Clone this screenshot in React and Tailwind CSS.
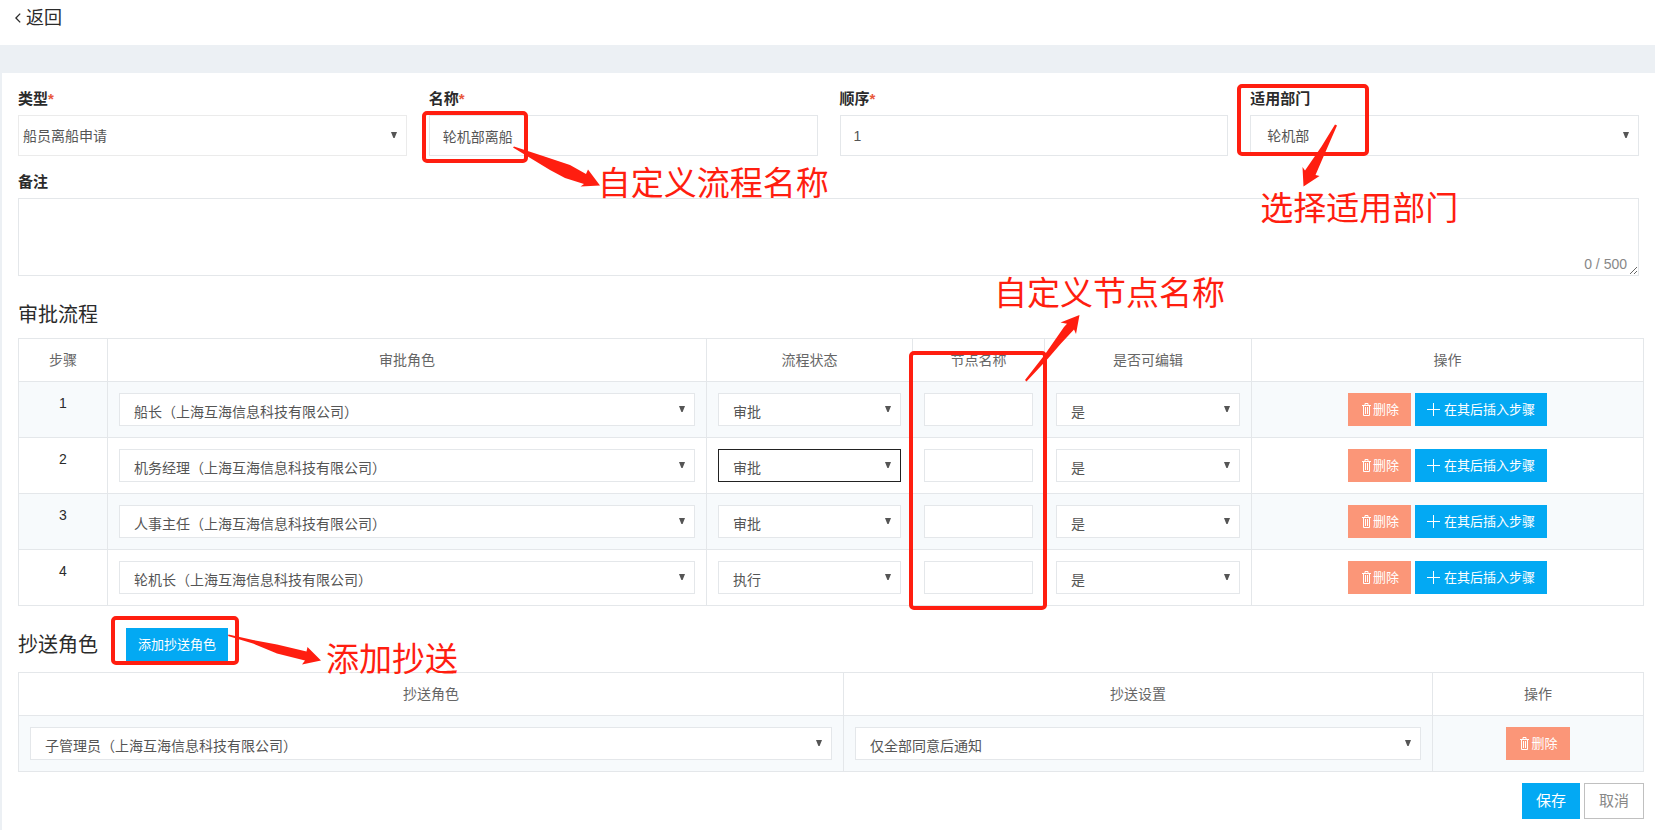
import { useState } from 'react';
import clsx from 'clsx';

const COMPANY = '（上海互海信息科技有限公司）';

const initialSteps = [
  { id: 1, role: '船长', status: '审批', nodeName: '', editable: '是' },
  { id: 2, role: '机务经理', status: '审批', nodeName: '', editable: '是', active: true },
  { id: 3, role: '人事主任', status: '审批', nodeName: '', editable: '是' },
  { id: 4, role: '轮机长', status: '执行', nodeName: '', editable: '是' },
];

const roleOptions = ['船长', '机务经理', '人事主任', '轮机长', '子管理员'].map((r) => r + COMPANY);

function TrashIcon() {
  return (
    <svg width="13" height="13" viewBox="0 0 13 13" fill="none" stroke="currentColor" aria-hidden="true">
      <path d="M2 2.5h9M5 2V.5h3V2M3.5 2.5v10h6v-10M5.500 4v7M7.500 4v7" />
    </svg>
  );
}

function PlusIcon() {
  return (
    <svg width="13" height="13" viewBox="0 0 13 13" fill="none" stroke="currentColor" aria-hidden="true">
      <path d="M6.5 0v13M0 6.5h13" />
    </svg>
  );
}

function Select({ id, label, options, defaultValue, className }) {
  return (
    <div className="relative">
      <select
        id={id}
        aria-label={label}
        defaultValue={defaultValue}
        className={clsx('block w-full appearance-none border bg-white pr-7 text-sm text-[#555] outline-none', className)}
      >
        {options.map((option) => (
          <option key={option}>{option}</option>
        ))}
      </select>
      <svg
        className="pointer-events-none absolute top-0 bottom-px right-[10px] my-auto fill-[#555]"
        width="6"
        height="6"
        viewBox="0 0 6 6"
        aria-hidden="true"
      >
        <path d="M0 0h6L3.6 6H2.4z" />
      </svg>
    </div>
  );
}

function TableSelect({ active, ...props }) {
  return (
    <Select {...props} className={clsx('h-[33px] pt-1 pl-[14px]', active ? 'border-[#222]' : 'border-[#e4e7ea]')} />
  );
}

function FieldLabel({ htmlFor, required, children }) {
  return (
    <label htmlFor={htmlFor} className="mb-1.5 block text-[15px] leading-5 font-bold text-[#2b2b2b]">
      {children}
      {required ? <span className="text-[#e8583c]">*</span> : null}
    </label>
  );
}

function DeleteButton({ onClick }) {
  return (
    <button
      type="button"
      onClick={onClick}
      className="inline-flex h-[33px] items-center bg-[#fb9678] px-3 text-[13px] text-white"
    >
      <TrashIcon />
      删除
    </button>
  );
}

// Red frame drawn over the part of the form being explained
function Frame({ className }) {
  return (
    <span
      className={clsx('pointer-events-none absolute z-10 rounded-[5px] border-4 border-[#ff1e10]', className)}
    />
  );
}

function Note({ className, children }) {
  return (
    <span
      className={clsx(
        'pointer-events-none absolute z-10 text-[33px] leading-10 font-normal whitespace-nowrap text-[#ff1e10]',
        className,
      )}
    >
      {children}
    </span>
  );
}

function Arrow({ className, width, height, d }) {
  return (
    <svg
      className={clsx('pointer-events-none absolute z-20 fill-[#ff1e10]', className)}
      width={width}
      height={height}
      viewBox={`0 0 ${width} ${height}`}
      aria-hidden="true"
    >
      <path d={d} />
    </svg>
  );
}

export default function App() {
  const [steps, setSteps] = useState(initialSteps);
  const [copyRoles, setCopyRoles] = useState([{ id: 1, role: '子管理员', rule: '仅全部同意后通知' }]);
  const [remark, setRemark] = useState('');

  const insertAfter = (index) => {
    const next = [...steps];
    next.splice(index + 1, 0, { id: Date.now(), role: '船长', status: '审批', nodeName: '', editable: '是' });
    setSteps(next);
  };

  const cell = 'border border-[#e4e7ea] p-[11px]';
  const headCell = 'border border-[#e4e7ea] py-[11px] font-normal text-[#666]';

  return (
    <div className="min-h-screen bg-[#ecf0f4] font-['Liberation_Sans','Noto_Sans_CJK_SC',sans-serif] text-sm leading-5 text-[#2b2b2b]">
      <header className="flex h-[45px] items-start bg-white px-[15px] pt-1">
        <a href="#back" className="flex items-center gap-[5px] text-lg leading-7">
          <svg width="6" height="10" viewBox="0 0 6 10" fill="none" stroke="currentColor" strokeWidth="1.3" aria-hidden="true">
            <path d="M5.2.6.9 5l4.3 4.4" />
          </svg>
          返回
        </a>
      </header>

      <main className="mt-7 ml-0.5 min-h-[757px] bg-white pt-4 pr-[11px] pb-[11px] pl-4">
        <form onSubmit={(e) => e.preventDefault()}>
          <div className="pr-[5px]">
            <div className="grid grid-cols-4 gap-x-[22px]">
              <div>
                <FieldLabel htmlFor="type" required>
                  类型
                </FieldLabel>
                <Select id="type" options={['船员离船申请']} className="h-[41px] border-[#ebebeb] pl-1" />
              </div>
              <div className="relative">
                <FieldLabel htmlFor="name" required>
                  名称
                </FieldLabel>
                <input
                  id="name"
                  defaultValue="轮机部离船"
                  className="block h-[41px] w-full border border-[#e4e7ea] px-[13px] text-[#555] outline-none"
                />
                <Frame className="top-[22px] -left-[7px] h-[52px] w-[106px]" />
                <Arrow
                  className="top-[57px] left-[84px]"
                  width={88}
                  height={42}
                  d="M0 1.5 1 .5 30 10 57 19 73 28 75 23.5 87 39.5 67.5 40.5 71 38 52 32 37 24z"
                />
                <Note className="top-[75px] left-[169px]">自定义流程名称</Note>
              </div>
              <div>
                <FieldLabel htmlFor="order" required>
                  顺序
                </FieldLabel>
                <input
                  id="order"
                  defaultValue="1"
                  className="block h-[41px] w-full border border-[#e4e7ea] px-[13px] text-[#555] outline-none"
                />
              </div>
              <div className="relative">
                <FieldLabel htmlFor="department">适用部门</FieldLabel>
                <Select id="department" options={['轮机部', '甲板部']} className="h-[41px] border-[#e4e7ea] pl-4" />
                <Frame className="-top-[5px] -left-[13px] h-[72px] w-[132px]" />
                <Arrow
                  className="top-[35px] left-[51px]"
                  width={37}
                  height={64}
                  d="M36 1.5 34 .5 20.5 22.5 4 46.5 1.5 43 2.5 62.5 18.5 52 14.5 51 22.500 32.500z"
                />
                <Note className="top-[100px] left-[10px]">选择适用部门</Note>
              </div>
            </div>

            <div className="mt-4">
              <FieldLabel htmlFor="remark">备注</FieldLabel>
              <div className="relative">
                <textarea
                  id="remark"
                  value={remark}
                  maxLength={500}
                  onChange={(e) => setRemark(e.target.value)}
                  className="block h-[78px] w-full resize-y border border-[#e4e7ea] px-3 py-2 outline-none"
                />
                <span className="pointer-events-none absolute right-3 bottom-[2px] text-[#888]">
                  {remark.length} / 500
                </span>
              </div>
            </div>
          </div>

          <h2 className="mt-[25px] mb-[9px] text-xl leading-7">审批流程</h2>
          <table className="w-full table-fixed border-collapse">
            <thead>
              <tr>
                <th className={clsx(headCell, 'w-[89px]')}>步骤</th>
                <th className={headCell}>审批角色</th>
                <th className={clsx(headCell, 'w-[206px]')}>流程状态</th>
                <th className={clsx(headCell, 'relative w-[132px]')}>
                  节点名称
                  <Frame className="top-3 -left-1 h-[259px] w-[138px]" />
                  <Arrow
                    className="-top-[25px] left-[112px]"
                    width={56}
                    height={68}
                    d="M1.5 67.500 0 66 19.500 41 39 13 42 9.700 35.500 8.500 54.500 1 51 20 49 15.500 35.500 30 23 44.500z"
                  />
                  <Note className="-top-[65px] left-[81px]">自定义节点名称</Note>
                </th>
                <th className={clsx(headCell, 'w-[207px]')}>是否可编辑</th>
                <th className={clsx(headCell, 'w-[392px]')}>操作</th>
              </tr>
            </thead>
            <tbody>
              {steps.map((step, index) => (
                <tr key={step.id} className="odd:bg-[#f7fafc]">
                  <td className={clsx(cell, 'text-center align-top')}>{index + 1}</td>
                  <td className={cell}>
                    <TableSelect label="审批角色" options={roleOptions} defaultValue={step.role + COMPANY} />
                  </td>
                  <td className={cell}>
                    <TableSelect
                      label="流程状态"
                      options={['审批', '执行']}
                      defaultValue={step.status}
                      active={step.active}
                    />
                  </td>
                  <td className={cell}>
                    <input
                      aria-label="节点名称"
                      defaultValue={step.nodeName}
                      className="block h-[33px] w-full border border-[#e4e7ea] bg-white px-3 text-[#555] outline-none"
                    />
                  </td>
                  <td className={cell}>
                    <TableSelect label="是否可编辑" options={['是', '否']} defaultValue={step.editable} />
                  </td>
                  <td className={cell}>
                    <div className="flex justify-center gap-1">
                      <DeleteButton onClick={() => setSteps(steps.filter((s) => s.id !== step.id))} />
                      <button
                        type="button"
                        onClick={() => insertAfter(index)}
                        className="inline-flex h-[33px] items-center gap-1 bg-[#03a9f3] px-3 text-[13px] text-white"
                      >
                        <PlusIcon />
                        在其后插入步骤
                      </button>
                    </div>
                  </td>
                </tr>
              ))}
            </tbody>
          </table>

          <div className="mt-[22px] mb-[11px] flex items-center gap-7">
            <h2 className="text-xl leading-7">抄送角色</h2>
            <div className="relative">
              <button
                type="button"
                onClick={() => setCopyRoles([...copyRoles, { id: Date.now(), role: '船长', rule: '仅全部同意后通知' }])}
                className="block h-[33px] bg-[#03a9f3] px-3 text-[13px] text-white"
              >
                添加抄送角色
              </button>
              <Frame className="-top-3 -left-[15px] h-[49px] w-[128px]" />
              <Arrow
                className="top-[6px] left-[102px]"
                width={94}
                height={32}
                d="M0 2 .5 .5 25 6 49 10.500 78.500 17.500 79.500 13 93 26.500 74 30.500 77 26.500 49 19.500 25 9.500z"
              />
              <Note className="top-3 left-[200px]">添加抄送</Note>
            </div>
          </div>
          <table className="w-full table-fixed border-collapse">
            <thead>
              <tr>
                <th className={headCell}>抄送角色</th>
                <th className={clsx(headCell, 'w-[589px]')}>抄送设置</th>
                <th className={clsx(headCell, 'w-[211px]')}>操作</th>
              </tr>
            </thead>
            <tbody>
              {copyRoles.map((item) => (
                <tr key={item.id} className="odd:bg-[#f7fafc]">
                  <td className={cell}>
                    <TableSelect label="抄送角色" options={roleOptions} defaultValue={item.role + COMPANY} />
                  </td>
                  <td className={cell}>
                    <TableSelect label="抄送设置" options={['仅全部同意后通知', '每步同意后通知']} defaultValue={item.rule} />
                  </td>
                  <td className={cell}>
                    <div className="flex justify-center">
                      <DeleteButton onClick={() => setCopyRoles(copyRoles.filter((c) => c.id !== item.id))} />
                    </div>
                  </td>
                </tr>
              ))}
            </tbody>
          </table>

          <div className="mt-[11px] flex justify-end gap-1 text-[15px]">
            <button type="submit" className="h-9 bg-[#03a9f3] px-[14px] text-white">
              保存
            </button>
            <button type="button" className="h-9 border border-[#c0c0c0] bg-white px-[14px] text-[#888]">
              取消
            </button>
          </div>
        </form>
      </main>
    </div>
  );
}
